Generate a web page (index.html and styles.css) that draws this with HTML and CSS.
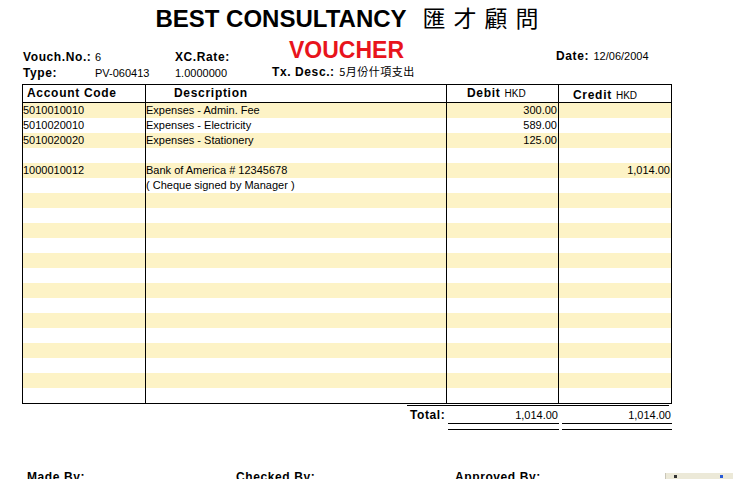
FILE: index.html
```html
<!DOCTYPE html>
<html lang="zh-Hant">
<head>
    <meta charset="UTF-8">
    <title>Voucher PV-060413</title>
    <link rel="stylesheet" href="styles.css">
</head>
<body>
    <div class="page">
        <h1 class="title">BEST CONSULTANCY<span class="title-zh">匯才顧問</span></h1>

        <div class="info">
            <span class="label">Vouch.No.:</span>
            <span class="value">6</span>
            <span class="label">XC.Rate:</span>
            <span class="doc-type">VOUCHER</span>
            <span><span class="label">Date:</span> <span class="value">12/06/2004</span></span>

            <span class="label">Type:</span>
            <span class="value">PV-060413</span>
            <span class="value">1.0000000</span>
            <span><span class="label">Tx. Desc.:</span> <span class="value value-zh">5月份什項支出</span></span>
            <span></span>
        </div>

        <table class="lines">
            <colgroup>
                <col class="col-code">
                <col class="col-desc">
                <col class="col-debit">
                <col class="col-credit">
            </colgroup>
            <thead>
                <tr>
                    <th class="h-code">Account Code</th>
                    <th class="h-desc">Description</th>
                    <th class="h-debit">Debit <small>HKD</small></th>
                    <th class="h-credit">Credit <small>HKD</small></th>
                </tr>
            </thead>
            <tbody>
                <tr><td>5010010010</td><td>Expenses - Admin. Fee</td><td class="num">300.00</td><td class="num"></td></tr>
                <tr><td>5010020010</td><td>Expenses - Electricity</td><td class="num">589.00</td><td class="num"></td></tr>
                <tr><td>5010020020</td><td>Expenses - Stationery</td><td class="num">125.00</td><td class="num"></td></tr>
                <tr><td></td><td></td><td></td><td></td></tr>
                <tr><td>1000010012</td><td>Bank of America # 12345678</td><td class="num"></td><td class="num">1,014.00</td></tr>
                <tr><td></td><td>( Cheque signed by Manager )</td><td></td><td></td></tr>
                <tr><td></td><td></td><td></td><td></td></tr>
                <tr><td></td><td></td><td></td><td></td></tr>
                <tr><td></td><td></td><td></td><td></td></tr>
                <tr><td></td><td></td><td></td><td></td></tr>
                <tr><td></td><td></td><td></td><td></td></tr>
                <tr><td></td><td></td><td></td><td></td></tr>
                <tr><td></td><td></td><td></td><td></td></tr>
                <tr><td></td><td></td><td></td><td></td></tr>
                <tr><td></td><td></td><td></td><td></td></tr>
                <tr><td></td><td></td><td></td><td></td></tr>
                <tr><td></td><td></td><td></td><td></td></tr>
                <tr><td></td><td></td><td></td><td></td></tr>
                <tr><td></td><td></td><td></td><td></td></tr>
                <tr><td></td><td></td><td></td><td></td></tr>
            </tbody>
        </table>

        <div class="totals">
            <span class="label total-label">Total:</span>
            <span class="total-value">1,014.00</span>
            <span class="total-value">1,014.00</span>
        </div>
    </div>

    <div class="signs">
        <span class="label">Made By:</span>
        <span class="label">Checked By:</span>
        <span class="label">Approved By:</span>
        <div class="corner">
            <span class="corner-dash"></span>
            <span class="corner-dot"></span>
        </div>
    </div>
</body>
</html>
```

FILE: styles.css
```css
:root {
    --ink: #000;
    --stripe: #fdf3c6;
    --red: #e8141c;
}

* {
    margin: 0;
    padding: 0;
    box-sizing: border-box;
}

body {
    font-family: "Liberation Sans", Arial, sans-serif;
    color: var(--ink);
    background-color: #fff;
    width: 733px;
    height: 479px;
    overflow: hidden;
}

.page {
    padding-left: 22px;
}

.title {
    width: 650px;
    padding-top: 3px;
    padding-left: 8px;
    font-size: 24px;
    line-height: 28px;
    font-weight: 700;
    text-align: center;
}

.title-zh {
    margin-left: 16px;
    font-family: "Noto Sans CJK TC", sans-serif;
    font-weight: 400;
    font-size: 23px;
    letter-spacing: 8px;
}

.label {
    font-size: 12px;
    line-height: 14px;
    font-weight: 700;
    letter-spacing: 0.6px;
}

.value {
    font-size: 11px;
    line-height: 14px;
}

.value-zh {
    font-family: "Noto Sans CJK TC", sans-serif;
    letter-spacing: 0.5px;
}

.info {
    display: grid;
    grid-template-columns: 72px 80px 97px 284px 1fr;
    grid-template-rows: 31px 14px;
    row-gap: 2px;
    align-items: end;
    padding-left: 1px;
    width: 650px;
}

.doc-type {
    padding-left: 17px;
    margin-bottom: 2px;
    color: var(--red);
    font-size: 23px;
    line-height: 23px;
    font-weight: 700;
}

.lines {
    margin-top: 4px;
    width: 650px;
    table-layout: fixed;
    border-collapse: collapse;
    border: 1px solid var(--ink);
    font-size: 11px;
}

.col-code { width: 123px; }
.col-desc { width: 301px; }
.col-debit { width: 112px; }
.col-credit { width: 113px; }

.lines th,
.lines td {
    border-left: 1px solid var(--ink);
    border-right: 1px solid var(--ink);
    text-align: left;
    white-space: nowrap;
    overflow: hidden;
}

.lines th {
    height: 17px;
    padding-top: 1px;
    vertical-align: top;
    font-size: 12px;
    line-height: 14px;
    letter-spacing: 0.7px;
    border-bottom: 1px solid var(--ink);
}

.lines th small {
    font-size: 10px;
    line-height: 10px;
    font-weight: 400;
    letter-spacing: 0;
}

.h-code { padding-left: 4px; }
.h-desc { padding-left: 28px; }
.h-debit { padding-left: 20px; }

.lines th.h-credit {
    padding-left: 14px;
    padding-top: 3px;
}

.lines td {
    height: 15px;
    line-height: 15px;
    padding-left: 0;
}

.lines tbody tr:nth-child(odd) {
    background-color: var(--stripe);
}

.lines td.num {
    text-align: right;
    padding-right: 1px;
}

.totals {
    display: grid;
    grid-template-columns: 38px 111px 110px;
    column-gap: 3px;
    width: 262px;
    margin-top: 1px;
    margin-left: 385px;
    border-top: 1px solid var(--ink);
    padding-top: 2px;
}

.total-label {
    padding-left: 3px;
    line-height: 15px;
}

.total-value {
    font-size: 11px;
    line-height: 15px;
    text-align: right;
    padding-right: 1px;
}

.total-value::after {
    content: "";
    display: block;
    height: 5px;
    margin-right: -1px;
    border-top: 1px solid var(--ink);
    border-bottom: 1px solid var(--ink);
}

.signs {
    display: grid;
    grid-template-columns: 209px 219px 1fr 68px;
    align-items: start;
    margin-top: 40px;
    padding-left: 27px;
}

.corner {
    display: flex;
    align-items: center;
    gap: 6px;
    height: 8px;
    margin-top: 3px;
    padding-left: 8px;
    background-color: #ece9d8;
    border-left: 1px solid #c9c6b8;
}

.corner-dash {
    width: 3px;
    height: 3px;
    background-color: #333;
}

.corner-dot {
    width: 3px;
    height: 3px;
    margin-left: auto;
    margin-right: 10px;
    background-color: #2a5bd7;
}
```
